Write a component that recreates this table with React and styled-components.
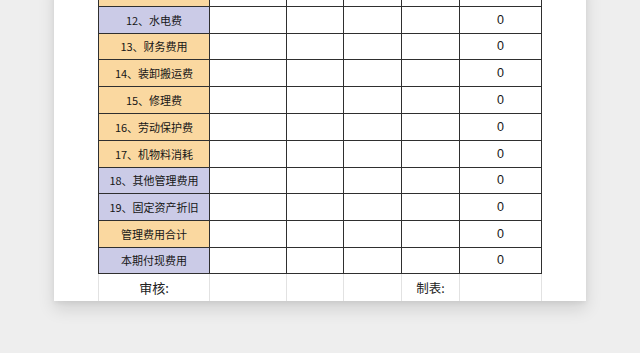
import React from "react";
import styled, { createGlobalStyle } from "styled-components";

const Global = createGlobalStyle`
  html, body { margin: 0; padding: 0; }
  body {
    background: #eeeeee;
    width: 640px;
    height: 353px;
    overflow: hidden;
    font-family: "Liberation Sans", "Noto Sans CJK SC", sans-serif;
    color: #1c1c1c;
  }
`;

const Stage = styled.div`
  padding-left: 54px;
  width: 532px;
`;

const Paper = styled.div`
  background: #ffffff;
  width: 532px;
  padding-left: 44px;
  box-sizing: border-box;
  box-shadow: 0 8px 16px rgba(0, 0, 0, 0.12), 0 2px 5px rgba(0, 0, 0, 0.06);
  margin-top: -21px;
`;

const COLS = "111px 77px 57px 58px 58px 82px";

const Grid = styled.div`
  display: grid;
  grid-template-columns: ${COLS};
  grid-auto-rows: 26.8px;
  width: 444px;
  box-sizing: border-box;
`;

const LINE = "#2f2f2f";
const FAINT = "#e2e2e2";

const Cell = styled.div`
  box-sizing: border-box;
  border-left: 1px solid ${(p) => (p.$foot ? FAINT : LINE)};
  border-top: ${(p) => (p.$foot ? "none" : `1px solid ${LINE}`)};
  border-right: ${(p) => (p.$last ? `1px solid ${p.$foot ? FAINT : LINE}` : "none")};
  border-bottom: ${(p) => (p.$bottom ? `1px solid ${LINE}` : "none")};
  background: ${(p) =>
    p.$tone === "blue" ? "#cbcbe7" : p.$tone === "orange" ? "#fad8a0" : "#ffffff"};
  display: flex;
  align-items: center;
  justify-content: center;
  white-space: nowrap;
  ${(p) => (p.$last ? "width: 83px;" : "")}
`;

const Label = styled.span`
  font-family: "Noto Sans CJK SC", sans-serif;
  font-size: 11px;
  color: #161616;
`;

const Num = styled.span`
  font-family: "Liberation Sans", sans-serif;
  font-size: 12.5px;
  color: #161616;
`;

const FootText = styled.span`
  font-family: "Noto Sans CJK SC", sans-serif;
  font-size: ${(p) => p.$size || 13}px;
  color: #222;
  padding-top: 1px;
`;

const rows = [
  { label: "", tone: "orange", zero: false },
  { label: "12、水电费", tone: "blue" },
  { label: "13、财务费用", tone: "orange" },
  { label: "14、装卸搬运费", tone: "orange" },
  { label: "15、修理费", tone: "orange" },
  { label: "16、劳动保护费", tone: "orange" },
  { label: "17、机物料消耗", tone: "orange" },
  { label: "18、其他管理费用", tone: "blue" },
  { label: "19、固定资产折旧", tone: "blue" },
  { label: "管理费用合计", tone: "orange" },
  { label: "本期付现费用", tone: "blue" },
];

export default function App() {
  return (
    <>
      <Global />
      <Stage>
        <Paper>
          <Grid>
            {rows.map((r, i) => {
              const bottom = i === rows.length - 1;
              return (
                <React.Fragment key={i}>
                  <Cell $tone={r.tone} $bottom={bottom}>
                    {r.label && <Label>{r.label}</Label>}
                  </Cell>
                  <Cell $bottom={bottom} />
                  <Cell $bottom={bottom} />
                  <Cell $bottom={bottom} />
                  <Cell $bottom={bottom} />
                  <Cell $bottom={bottom} $last>
                    {r.zero !== false && <Num>0</Num>}
                  </Cell>
                </React.Fragment>
              );
            })}
            <Cell $foot>
              <FootText $size={13}>审核:</FootText>
            </Cell>
            <Cell $foot />
            <Cell $foot />
            <Cell $foot />
            <Cell $foot>
              <FootText $size={12.5}>制表:</FootText>
            </Cell>
            <Cell $foot $last />
          </Grid>
        </Paper>
      </Stage>
    </>
  );
}
